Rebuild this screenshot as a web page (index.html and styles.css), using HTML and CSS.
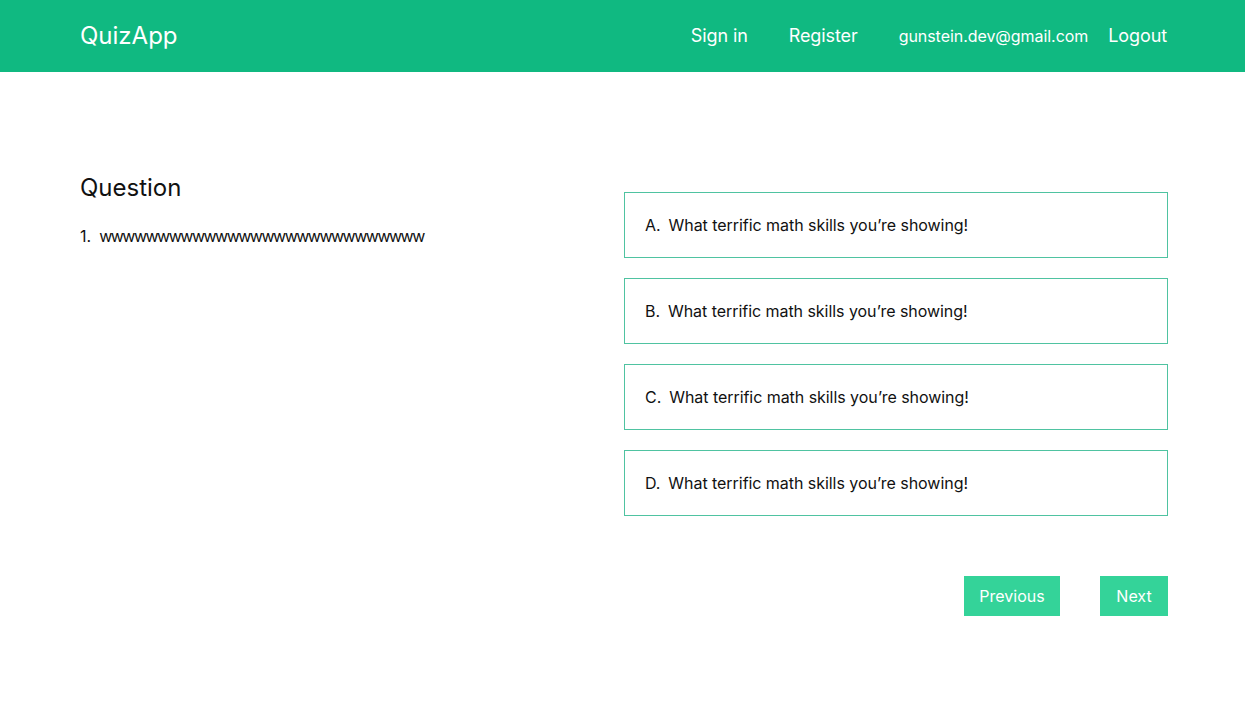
FILE: index.html
```html
<!DOCTYPE html>
<html>
<head>
<meta charset="utf-8">
<link rel="stylesheet" href="styles.css">
</head>
<body>
<header class="topbar">
  <div class="container bar">
    <a class="brand">QuizApp</a>
    <nav class="nav">
      <a class="nav-link">Sign in</a>
      <a class="nav-link">Register</a>
      <span class="email">gunstein.dev@gmail.com</span>
      <a class="nav-link logout">Logout</a>
    </nav>
  </div>
</header>
<main class="container quiz">
  <section class="question">
    <h2 class="q-title">Question</h2>
    <p class="q-text"><span class="q-num">1.</span><span class="q-body">wwwww<!---->wwwww<!---->wwwww<!---->wwwww<!---->wwwww<!---->www</span></p>
  </section>
  <section class="answers">
    <div class="answer"><span class="letter">A.</span>What terrific math skills you’re showing!</div>
    <div class="answer"><span class="letter">B.</span>What terrific math skills you’re showing!</div>
    <div class="answer"><span class="letter">C.</span>What terrific math skills you’re showing!</div>
    <div class="answer"><span class="letter">D.</span>What terrific math skills you’re showing!</div>
    <div class="controls">
      <button class="btn btn-prev">Previous</button>
      <button class="btn btn-next">Next</button>
    </div>
  </section>
</main>
</body>
</html>
```
FILE: styles.css
```css
* { box-sizing: border-box; }
body {
  margin: 0;
  font-family: Inter, "Noto Sans", sans-serif;
  color: #111;
  background: #fff;
}
.container {
  width: 1088px;
  margin-left: 80px;
}
.topbar {
  background: #10b981;
  height: 72px;
}
.bar {
  height: 72px;
  display: flex;
  align-items: center;
  justify-content: space-between;
}
.brand {
  color: #fff;
  font-size: 24px;
  font-weight: 400;
  margin-top: -1px;
}
.nav {
  display: flex;
  align-items: center;
  margin-top: -1px;
  margin-right: 1px;
}
.nav-link {
  color: #fff;
  font-size: 18px;
  margin-left: 41px;
  letter-spacing: -0.1px;
}
.nav-link:first-child { margin-left: 0; }
.email {
  color: #fff;
  font-size: 16px;
  margin-left: 41px;
  letter-spacing: -0.05px;
}
.logout { margin-left: 20px; }
.quiz {
  display: grid;
  grid-template-columns: 1fr 1fr;
  padding-top: 100px;
}
.q-title {
  margin: 0;
  font-size: 24px;
  font-weight: 400;
  line-height: 32px;
}
.q-text {
  margin: 20px 0 0;
  font-size: 16px;
  line-height: 24px;
}
.q-num { margin-right: 8px; }
.q-body { letter-spacing: -1.5px; }
.answers {
  display: flex;
  flex-direction: column;
  gap: 20px;
  padding-top: 20px;
}
.answer {
  height: 66px;
  border: 1px solid #4fc3a1;
  padding: 0 20px;
  display: flex;
  align-items: center;
  font-size: 16px;
  letter-spacing: -0.05px;
}
.letter { margin-right: 8px; }
.controls {
  display: flex;
  justify-content: flex-end;
  gap: 40px;
  margin-top: 40px;
}
.btn {
  background: #34d399;
  color: #fff;
  border: none;
  height: 40px;
  padding: 0;
  font-family: inherit;
  font-size: 16px;
}
.btn-prev { width: 96px; }
.btn-next { width: 68px; }
```
